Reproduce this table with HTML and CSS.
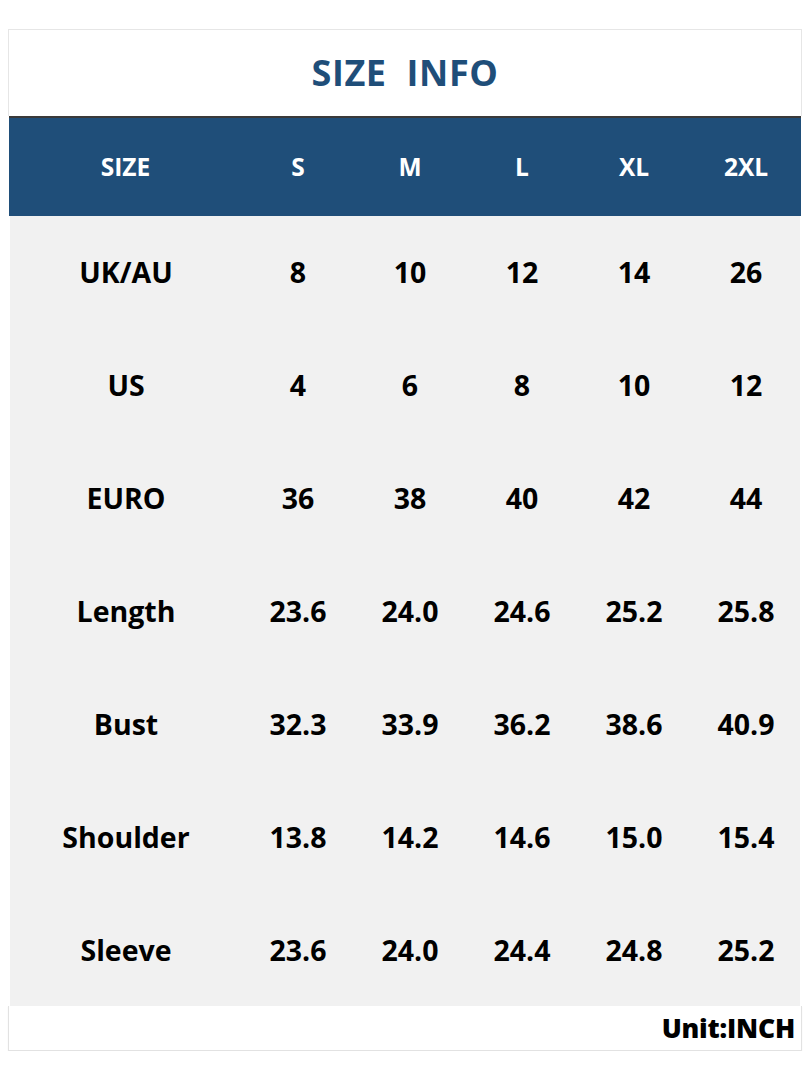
FILE: index.html
```html
<!DOCTYPE html>
<html>
<head>
<meta charset="utf-8">
<link rel="stylesheet" href="styles.css">
</head>
<body>
<div class="sheet">
  <div class="title">SIZE&nbsp;&nbsp;INFO</div>
  <div class="head">
    <div class="cell">SIZE</div>
    <div class="cell">S</div>
    <div class="cell">M</div>
    <div class="cell">L</div>
    <div class="cell">XL</div>
    <div class="cell">2XL</div>
  </div>
  <div class="body">
    <div class="cell">UK/AU</div><div class="cell">8</div><div class="cell">10</div><div class="cell">12</div><div class="cell">14</div><div class="cell">26</div>
    <div class="cell">US</div><div class="cell">4</div><div class="cell">6</div><div class="cell">8</div><div class="cell">10</div><div class="cell">12</div>
    <div class="cell">EURO</div><div class="cell">36</div><div class="cell">38</div><div class="cell">40</div><div class="cell">42</div><div class="cell">44</div>
    <div class="cell">Length</div><div class="cell">23.6</div><div class="cell">24.0</div><div class="cell">24.6</div><div class="cell">25.2</div><div class="cell">25.8</div>
    <div class="cell">Bust</div><div class="cell">32.3</div><div class="cell">33.9</div><div class="cell">36.2</div><div class="cell">38.6</div><div class="cell">40.9</div>
    <div class="cell">Shoulder</div><div class="cell">13.8</div><div class="cell">14.2</div><div class="cell">14.6</div><div class="cell">15.0</div><div class="cell">15.4</div>
    <div class="cell">Sleeve</div><div class="cell">23.6</div><div class="cell">24.0</div><div class="cell">24.4</div><div class="cell">24.8</div><div class="cell">25.2</div>
  </div>
  <div class="footer">Unit:INCH</div>
</div>
</body>
</html>
```
FILE: styles.css
```css
html, body {
  margin: 0;
  padding: 0;
  background: #ffffff;
}
body {
  font-family: "Open Sans", "Noto Sans", "Liberation Sans", sans-serif;
  font-weight: 700;
}
.sheet {
  width: 794px;
  margin: 29px 0 0 8px;
  display: flex;
  flex-direction: column;
}
.title {
  height: 87px;
  border: 1px solid #e6e6e6;
  border-bottom: none;
  background: #ffffff;
  display: flex;
  align-items: center;
  justify-content: center;
  color: #1f4e79;
  font-size: 36px;
  letter-spacing: 0.6px;
  padding-bottom: 2px;
  box-sizing: border-box;
}
.head {
  height: 100px;
  border-top: 2px solid #3a3a3a;
  margin-left: 1px;
  margin-right: 1px;
  background: #1f4e79;
  display: grid;
  grid-template-columns: 233px repeat(5, 112px);
  color: #ffffff;
  font-size: 24.5px;
  box-sizing: border-box;
  padding-bottom: 2px;
}
.body {
  height: 790px;
  margin-left: 2px;
  margin-right: 2px;
  background: #f1f1f1;
  display: grid;
  grid-template-columns: 232px repeat(5, 112px);
  grid-template-rows: repeat(7, 1fr);
  color: #000000;
  font-size: 28.5px;
}
.cell {
  display: flex;
  align-items: center;
  justify-content: center;
}
.footer {
  height: 44px;
  border: 1px solid #e2e2e2;
  border-top: none;
  box-shadow: 0 1px 1px #ececec;
  background: #ffffff;
  display: flex;
  align-items: center;
  justify-content: flex-end;
  padding-right: 6px;
  font-size: 26.5px;
  font-weight: 800;
  color: #000000;
  letter-spacing: -0.2px;
}
```
